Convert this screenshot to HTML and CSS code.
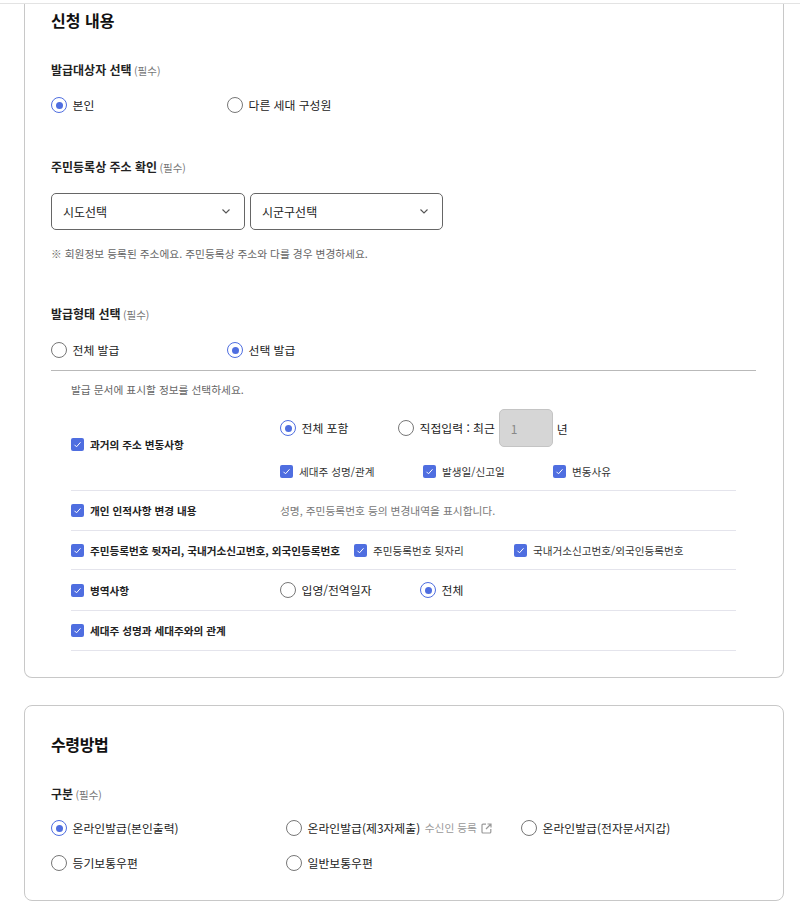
FILE: index.html
```html
<!DOCTYPE html>
<html lang="ko">
<head>
<meta charset="utf-8">
<title>신청 내용</title>
<link rel="stylesheet" href="styles.css">
</head>
<body>
<div class="topbar"></div>
<main class="page">
  <section class="card card-first">
    <h2 class="title title-first">신청 내용</h2>

    <div class="label label-a">발급대상자 선택 <span class="req">(필수)</span></div>
    <div class="radios radios-a">
      <label class="radio w176"><i class="dot on"></i>본인</label>
      <label class="radio"><i class="dot"></i>다른 세대 구성원</label>
    </div>

    <div class="label label-b">주민등록상 주소 확인 <span class="req">(필수)</span></div>
    <div class="selects">
      <div class="select sel1">시도선택
        <svg class="chev" width="8" height="5" viewBox="0 0 8 5"><path d="M.5.5L4 4 7.500.5" fill="none" stroke="#555" stroke-width="1.100"/></svg>
      </div>
      <div class="select sel2">시군구선택
        <svg class="chev" width="8" height="5" viewBox="0 0 8 5"><path d="M.5.5L4 4 7.500.5" fill="none" stroke="#555" stroke-width="1.100"/></svg>
      </div>
    </div>
    <p class="note">※ 회원정보 등록된 주소에요. 주민등록상 주소와 다를 경우 변경하세요.</p>

    <div class="label label-c">발급형태 선택 <span class="req">(필수)</span></div>
    <div class="radios radios-c">
      <label class="radio w176"><i class="dot"></i>전체 발급</label>
      <label class="radio"><i class="dot on"></i>선택 발급</label>
    </div>

    <div class="detail">
      <p class="hint">발급 문서에 표시할 정보를 선택하세요.</p>

      <div class="row row-tall">
        <label class="check strong"><i class="box"></i>과거의 주소 변동사항</label>
        <div class="opts">
          <div class="opt-line">
            <label class="radio w118"><i class="dot on"></i>전체 포함</label>
            <label class="radio"><i class="dot"></i>직접입력 : 최근</label>
            <span class="year">1</span>
            <span class="unit">년</span>
          </div>
          <div class="opt-line opt-checks">
            <label class="check w143"><i class="box"></i>세대주 성명/관계</label>
            <label class="check w130"><i class="box"></i>발생일/신고일</label>
            <label class="check"><i class="box"></i>변동사유</label>
          </div>
        </div>
      </div>

      <div class="row">
        <label class="check strong col1"><i class="box"></i>개인 인적사항 변경 내용</label>
        <span class="desc">성명, 주민등록번호 등의 변경내역을 표시합니다.</span>
      </div>

      <div class="row row-s">
        <label class="check strong col-wide"><i class="box"></i>주민등록번호 뒷자리, 국내거소신고번호, 외국인등록번호</label>
        <label class="check w160"><i class="box"></i>주민등록번호 뒷자리</label>
        <label class="check"><i class="box"></i>국내거소신고번호/외국인등록번호</label>
      </div>

      <div class="row row-l">
        <label class="check strong col1"><i class="box"></i>병역사항</label>
        <label class="radio w140"><i class="dot"></i>입영/전역일자</label>
        <label class="radio"><i class="dot on"></i>전체</label>
      </div>

      <div class="row">
        <label class="check strong col1"><i class="box"></i>세대주 성명과 세대주와의 관계</label>
      </div>
    </div>
  </section>

  <section class="card card-second">
    <h2 class="title">수령방법</h2>
    <div class="label label-d">구분 <span class="req">(필수)</span></div>
    <div class="method">
      <label class="radio"><i class="dot on"></i>온라인발급(본인출력)</label>
      <label class="radio"><i class="dot"></i>온라인발급(제3자제출)
        <span class="link">수신인 등록
          <svg width="11" height="11" viewBox="0 0 11 11"><path d="M5 1.200H2a1 1 0 0 0-1 1V9a1 1 0 0 0 1 1h6.800a1 1 0 0 0 1-1V6M6.500 1H10v3.500M10 1L5 6" fill="none" stroke="#999" stroke-width="1.200"/></svg>
        </span>
      </label>
      <label class="radio"><i class="dot"></i>온라인발급(전자문서지갑)</label>
      <label class="radio"><i class="dot"></i>등기보통우편</label>
      <label class="radio"><i class="dot"></i>일반보통우편</label>
    </div>
  </section>
</main>
</body>
</html>
```

FILE: styles.css
```css
* { box-sizing: border-box; }
html, body { margin: 0; padding: 0; background: #fff; }
body {
  font-family: "Noto Sans CJK KR", "Noto Sans", sans-serif;
  font-size: 12px;
  color: #222;
  height: 912px;
  overflow: hidden;
}
.topbar { height: 4px; border-bottom: 1px solid #e3e3e3; }
.page { padding: 0 16px 0 24px; }
.card {
  border: 1px solid #c8c8c8;
  background: #fff;
  padding: 0 26px;
}
.card-first {
  border-top: 0;
  border-radius: 0 0 8px 8px;
  height: 674px;
}
.card-second {
  border-radius: 8px;
  margin-top: 27px;
  height: 196px;
}
.title { margin: 0; font-size: 16px; line-height: 24px; font-weight: 700; color: #111; }
.title-first { padding-top: 4px; height: 28px; }
.card-second .title { padding-top: 26px; box-sizing: content-box; letter-spacing: -0.4px; }
.label { font-size: 12px; line-height: 18px; font-weight: 700; color: #222; }
.req { font-size: 10.500px; font-weight: 400; color: #777; margin-left: -1px; }
.label-a { margin-top: 29px; }
.label-b { margin-top: 43px; }
.label-c { margin-top: 42px; }
.label-d { margin-top: 29px; }

.radios { display: flex; align-items: center; height: 20px; }
.radios-a { margin-top: 15px; }
.radios-c { margin-top: 16px; }
.radio { display: inline-flex; align-items: center; gap: 5.500px; font-size: 11.850px; line-height: 20px; color: #222; white-space: nowrap; }
.w176 { width: 176px; }
.w118 { width: 118px; }
.w140 { width: 140px; }
.dot {
  flex: none;
  width: 16px; height: 16px;
  border: 1px solid #777;
  border-radius: 50%;
  background: #fff;
  position: relative;
}
.dot.on { border-color: #4f6ee0; }
.dot.on::after {
  content: "";
  position: absolute;
  left: 3.500px; top: 3.500px;
  width: 7px; height: 7px;
  border-radius: 50%;
  background: #4f6ee0;
}

.selects { display: flex; gap: 5px; margin-top: 16px; }
.select {
  height: 37px;
  border: 1px solid #666;
  border-radius: 5px;
  padding: 0 11px 1px;
  display: flex;
  align-items: center;
  justify-content: space-between;
  font-size: 12px;
  color: #222;
}
.sel1 { width: 194px; }
.sel2 { width: 193px; }
.chev { margin-right: 3px; }
.note { margin: 15px 0 0; font-size: 10.720px; line-height: 18px; color: #666; }

.detail { border-top: 1px solid #b9b9b9; margin: 10px 0 0; padding: 0 20px; width: 705px; }
.hint { margin: 10px 0 0; font-size: 10.720px; line-height: 18px; color: #666; }

.row { display: flex; align-items: center; border-bottom: 1px solid #e4e4ec; height: 40px; }
.row-s { height: 39px; }
.row-l { height: 41px; }
.row-tall { height: 92px; }
.check { display: inline-flex; align-items: center; gap: 6px; font-size: 10.620px; color: #333; white-space: nowrap; }
.check.strong { font-weight: 700; color: #222; }
.box {
  flex: none;
  width: 13px; height: 13px;
  border-radius: 2px;
  background: #4f6ee0 url("data:image/svg+xml,%3Csvg xmlns='http://www.w3.org/2000/svg' viewBox='0 0 13 13'%3E%3Cpath d='M3.500 6.800l2 2 4-4.500' fill='none' stroke='%23fff' stroke-width='1'/%3E%3C/svg%3E") center/13px 13px no-repeat;
}
.col1, .row-tall > .check { width: 209px; }
.col-wide { width: 283px; }
.w143 { width: 143px; }
.w130 { width: 130px; }
.w160 { width: 160px; }
.desc { font-size: 10.720px; color: #777; }
.opts { display: flex; flex-direction: column; align-self: flex-start; padding-top: 10px; }
.opt-line { display: flex; align-items: center; height: 38px; }
.opt-checks { margin-top: 9px; height: 30px; }
.year {
  width: 54px; height: 38px;
  margin-left: 4px;
  background: #d6d6d6;
  border: 1px solid #c4c4c4;
  border-radius: 5px;
  padding-left: 11px;
  display: flex; align-items: center;
  font-size: 12px;
  color: #888;
}
.unit { margin-left: 4px; font-size: 11.850px; color: #222; }

.method { display: grid; grid-template-columns: 235px 235px 235px; row-gap: 15px; margin-top: 14px; }
.link { display: inline-flex; align-items: center; gap: 4px; margin-left: -1px; font-size: 10.720px; color: #999; }
```
